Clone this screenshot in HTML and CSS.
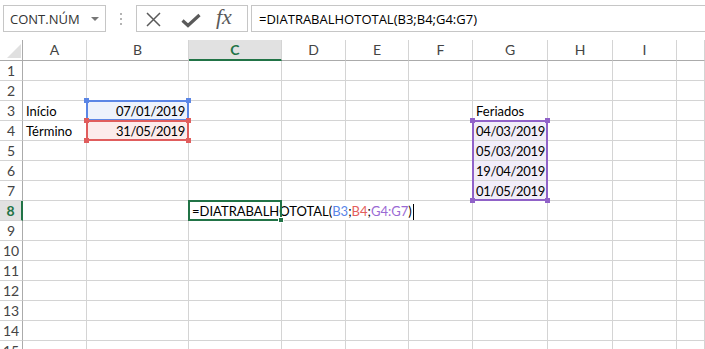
FILE: index.html
```html
<!DOCTYPE html>
<html lang="pt">
  <head>
    <meta charset="UTF-8" />
    <title>DIATRABALHOTOTAL</title>
    <link rel="stylesheet" href="styles.css">
  </head>
  <body>
    <div class="bar">
      <div class="namebox">
        <span>CONT.NÚM</span>
        <span class="arrow"></span>
      </div>
      <div class="grip"><i></i><i></i><i></i></div>
      <div class="fxbox">
        <svg class="ico-x" width="15" height="15" viewBox="0 0 15 15">
          <path d="M1 1 L14 14 M14 1 L1 14" stroke="#5a5a5a" stroke-width="1.5" fill="none" />
        </svg>
        <svg class="ico-ok" width="20" height="15" viewBox="0 0 20 15">
          <path d="M1.5 7.5 L7 12.5 L18.5 2" stroke="#5a5a5a" stroke-width="3.2" fill="none" />
        </svg>
        <span class="fx">fx</span>
      </div>
      <div class="formula">=DIATRABALHOTOTAL(B3;B4;G4:G7)</div>
    </div>

    <div class="grid">
      <div class="corner"><span></span></div>
      <div class="hd">A</div><div class="hd">B</div><div class="hd sel">C</div><div class="hd">D</div><div class="hd">E</div>
      <div class="hd">F</div><div class="hd">G</div><div class="hd">H</div><div class="hd">I</div><div class="hd"></div>

      <div class="rh">1</div><div class="c"></div><div class="c"></div><div class="c"></div><div class="c"></div><div class="c"></div><div class="c"></div><div class="c"></div><div class="c"></div><div class="c"></div><div class="c"></div>
      <div class="rh">2</div><div class="c"></div><div class="c"></div><div class="c"></div><div class="c"></div><div class="c"></div><div class="c"></div><div class="c"></div><div class="c"></div><div class="c"></div><div class="c"></div>
      <div class="rh">3</div><div class="c">Início</div><div class="c num blue">07/01/2019</div><div class="c"></div><div class="c"></div><div class="c"></div><div class="c"></div><div class="c">Feriados</div><div class="c"></div><div class="c"></div><div class="c"></div>
      <div class="rh">4</div><div class="c">Término</div><div class="c num red">31/05/2019</div><div class="c"></div><div class="c"></div><div class="c"></div><div class="c"></div><div class="c num purple">04/03/2019</div><div class="c"></div><div class="c"></div><div class="c"></div>
      <div class="rh">5</div><div class="c"></div><div class="c"></div><div class="c"></div><div class="c"></div><div class="c"></div><div class="c"></div><div class="c num purple">05/03/2019</div><div class="c"></div><div class="c"></div><div class="c"></div>
      <div class="rh">6</div><div class="c"></div><div class="c"></div><div class="c"></div><div class="c"></div><div class="c"></div><div class="c"></div><div class="c num purple">19/04/2019</div><div class="c"></div><div class="c"></div><div class="c"></div>
      <div class="rh">7</div><div class="c"></div><div class="c"></div><div class="c"></div><div class="c"></div><div class="c"></div><div class="c"></div><div class="c num purple">01/05/2019</div><div class="c"></div><div class="c"></div><div class="c"></div>
      <div class="rh sel">8</div><div class="c"></div><div class="c"></div>
      <div class="c edit">=DIATRABALHOTOTAL(<span class="t-blue">B3</span>;<span class="t-red">B4</span>;<span class="t-purple">G4:G7</span>)<span class="caret"></span></div>
      <div class="c spill"></div><div class="c spill"></div><div class="c"></div><div class="c"></div><div class="c"></div><div class="c"></div><div class="c"></div>
      <div class="rh">9</div><div class="c"></div><div class="c"></div><div class="c"></div><div class="c"></div><div class="c"></div><div class="c"></div><div class="c"></div><div class="c"></div><div class="c"></div><div class="c"></div>
      <div class="rh">10</div><div class="c"></div><div class="c"></div><div class="c"></div><div class="c"></div><div class="c"></div><div class="c"></div><div class="c"></div><div class="c"></div><div class="c"></div><div class="c"></div>
      <div class="rh">11</div><div class="c"></div><div class="c"></div><div class="c"></div><div class="c"></div><div class="c"></div><div class="c"></div><div class="c"></div><div class="c"></div><div class="c"></div><div class="c"></div>
      <div class="rh">12</div><div class="c"></div><div class="c"></div><div class="c"></div><div class="c"></div><div class="c"></div><div class="c"></div><div class="c"></div><div class="c"></div><div class="c"></div><div class="c"></div>
      <div class="rh">13</div><div class="c"></div><div class="c"></div><div class="c"></div><div class="c"></div><div class="c"></div><div class="c"></div><div class="c"></div><div class="c"></div><div class="c"></div><div class="c"></div>
      <div class="rh">14</div><div class="c"></div><div class="c"></div><div class="c"></div><div class="c"></div><div class="c"></div><div class="c"></div><div class="c"></div><div class="c"></div><div class="c"></div><div class="c"></div>
      <div class="rh">15</div><div class="c"></div><div class="c"></div><div class="c"></div><div class="c"></div><div class="c"></div><div class="c"></div><div class="c"></div><div class="c"></div><div class="c"></div><div class="c"></div>

      <!-- marcas dos intervalos da fórmula -->
      <div class="rng rng-blue"><i class="tl"></i><i class="tr"></i><i class="bl"></i><i class="br"></i></div>
      <div class="rng rng-red"><i class="tl"></i><i class="tr"></i><i class="bl"></i><i class="br"></i></div>
      <div class="rng rng-purple"><i class="tl"></i><i class="tr"></i><i class="bl"></i><i class="br"></i></div>
      <div class="active"><i class="fill"></i></div>
    </div>
  </body>
</html>
```

FILE: styles.css
```css
* {
  box-sizing: border-box;
}
body {
  margin: 0;
  background: #fff;
  font-family: "Lato", sans-serif;
  color: #000;
  overflow: hidden;
}
.bar {
  height: 40px;
  display: flex;
  align-items: flex-start;
  padding: 5px 0 0 3px;
}
.namebox {
  width: 103px;
  height: 27px;
  border: 1px solid #c6c6c6;
  display: flex;
  align-items: center;
  justify-content: space-between;
  padding: 0 6px 0 6px;
  font-family: "Open Sans", sans-serif;
  font-size: 13px;
  color: #333;
}
.arrow {
  border-top: 4px solid #777;
  border-left: 4px solid transparent;
  border-right: 4px solid transparent;
  margin-top: 1px;
}
.grip {
  width: 2px;
  margin: 8px 14px 0 14px;
  display: flex;
  flex-direction: column;
  gap: 3px;
}
.grip i {
  width: 2px;
  height: 2px;
  background: #b4b4b4;
}
.fxbox {
  width: 112px;
  height: 27px;
  border: 1px solid #c6c6c6;
  display: flex;
  align-items: center;
  padding: 0 0 0 9px;
}
.ico-x {
  margin-top: 2px;
}
.ico-ok {
  margin: 3px 0 0 20px;
}
.fx {
  font-family: "Liberation Serif", serif;
  font-style: italic;
  font-size: 22px;
  color: #5a5a5a;
  margin: -3px 0 0 15px;
}
.formula {
  flex: 1;
  height: 27px;
  margin-left: 3px;
  border: 1px solid #c6c6c6;
  border-right: none;
  padding: 4px 0 0 7px;
  font-family: "Open Sans", sans-serif;
  font-size: 13px;
}

.grid {
  position: relative;
  display: grid;
  grid-template-columns: 23px 64px 102px 93px 64px 63px 64px 75px 65px 64px 1fr;
  grid-template-rows: 21px repeat(15, 20px);
}
.corner {
  border-right: 1px solid #ababab;
  border-bottom: 1px solid #ababab;
  position: relative;
}
.corner span {
  position: absolute;
  right: 1px;
  bottom: 2px;
  border-left: 14px solid transparent;
  border-bottom: 14px solid #e0e0e0;
}
.hd {
  border-right: 1px solid #d4d4d4;
  border-bottom: 1px solid #ababab;
  text-align: center;
  font-size: 14px;
  line-height: 20px;
  color: #444;
}
.hd.sel {
  background: #e1e1e1;
  border-bottom: 2px solid #217346;
  color: #217346;
  font-weight: bold;
}
.rh {
  border-right: 1px solid #ababab;
  border-bottom: 1px solid #d4d4d4;
  text-align: center;
  font-size: 14px;
  line-height: 20px;
  color: #444;
}
.rh.sel {
  background: #e1e1e1;
  border-right: 2px solid #217346;
  color: #217346;
  font-weight: bold;
}
.c {
  border-right: 1px solid #d4d4d4;
  border-bottom: 1px solid #d4d4d4;
  font-size: 13px;
  line-height: 20px;
  padding: 0 3px;
  white-space: nowrap;
}
.c.num {
  text-align: right;
  letter-spacing: -0.3px;
}
.c.blue {
  background: #edf2fc;
}
.c.red {
  background: #fcebeb;
}
.c.purple {
  background: #f1edf8;
}
.c.spill {
  border-right: none;
}
.c.edit {
  position: relative;
  z-index: 1;
  overflow: visible;
}
.t-blue {
  color: #5b86e8;
}
.t-red {
  color: #e35d5d;
}
.t-purple {
  color: #9a6ad4;
}
.caret {
  display: inline-block;
  width: 1px;
  height: 16px;
  background: #000;
  vertical-align: -4px;
  margin-left: 1px;
}

.rng {
  position: absolute;
  top: -1px;
  left: -1px;
  right: 0;
  bottom: 0;
  border: 2px solid;
  z-index: 2;
}
.rng i {
  position: absolute;
  width: 5px;
  height: 5px;
}
.rng .tl { top: -4px; left: -4px; }
.rng .tr { top: -4px; right: -4px; }
.rng .bl { bottom: -4px; left: -4px; }
.rng .br { bottom: -4px; right: -4px; }
.rng-blue {
  grid-row: 4 / 5;
  grid-column: 3 / 4;
  border-color: #5b86e5;
}
.rng-blue i { background: #5b86e5; }
.rng-red {
  grid-row: 5 / 6;
  grid-column: 3 / 4;
  border-color: #e05d5d;
}
.rng-red i { background: #e05d5d; }
.rng-purple {
  grid-row: 5 / 9;
  grid-column: 8 / 9;
  border-color: #9062c8;
}
.rng-purple i { background: #9062c8; }

.active {
  position: absolute;
  grid-row: 9 / 10;
  grid-column: 4 / 5;
  top: -1px;
  left: -1px;
  right: 0;
  bottom: 0;
  border: 2px solid #217346;
  z-index: 3;
}
.active .fill {
  position: absolute;
  right: -4px;
  bottom: -4px;
  width: 6px;
  height: 6px;
  background: #217346;
  border: 1px solid #fff;
}
```
